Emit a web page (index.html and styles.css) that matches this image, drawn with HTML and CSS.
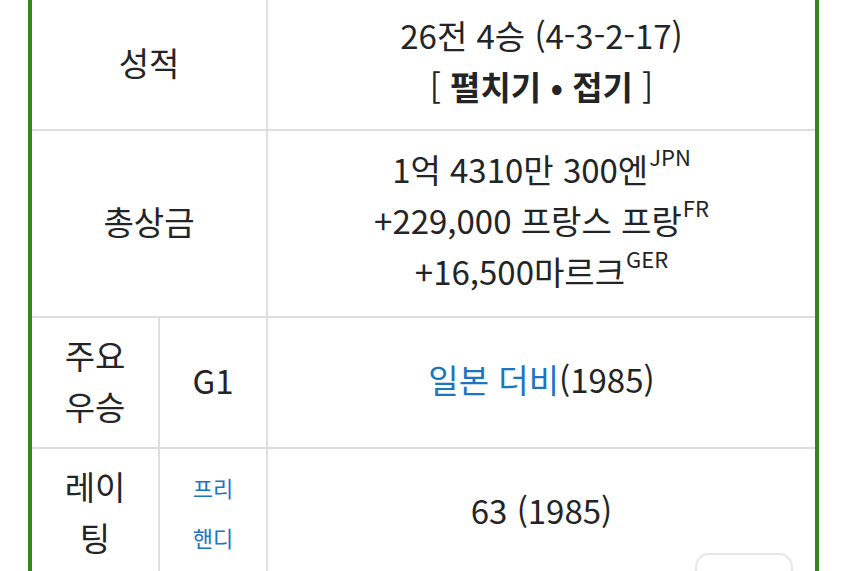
FILE: index.html
```html
<!DOCTYPE html>
<html lang="ko">
<head>
<meta charset="utf-8">
<link rel="stylesheet" href="styles.css">
</head>
<body>
<div class="info">
  <div class="cell label span2">성적</div>
  <div class="cell value">
    <div>26전 4승 (4-3-2-17)</div>
    <div>[ <b>펼치기 • 접기</b> ]</div>
  </div>

  <div class="cell label span2">총상금</div>
  <div class="cell value">
    <div>1억 4310만 300엔<sup>JPN</sup></div>
    <div>+229,000 프랑스 프랑<sup>FR</sup></div>
    <div>+16,500마르크<sup>GER</sup></div>
  </div>

  <div class="cell label">주요<br>우승</div>
  <div class="cell label">G1</div>
  <div class="cell value"><div><a class="link" href="#">일본 더비</a>(1985)</div></div>

  <div class="cell label">레이<br>팅</div>
  <div class="cell label small"><a class="link" href="#">프리<br>핸디</a></div>
  <div class="cell value"><div>63 (1985)</div></div>
</div>
<div class="float-btn"></div>
</body>
</html>
```

FILE: styles.css
```css
html, body {
  margin: 0;
  padding: 0;
  background: #ffffff;
  overflow: hidden;
}
body {
  font-family: "Noto Sans CJK KR", "Noto Sans", sans-serif;
  color: #222426;
  font-size: 33px;
  line-height: 51px;
}
.info {
  margin-left: 28px;
  width: 783px;
  display: grid;
  grid-template-columns: 126px 106px 547px;
  grid-template-rows: 129px 185px 129px 130px;
  gap: 2px;
  background: #dedede;
  border-left: 4px solid #34861b;
  border-right: 4px solid #34861b;
}
.cell {
  background: #ffffff;
  display: flex;
  flex-direction: column;
  align-items: center;
  justify-content: center;
  text-align: center;
  padding-bottom: 4px;
}
.value {
  padding-bottom: 7px;
}
.span2 {
  grid-column: span 2;
}
.small {
  font-size: 22px;
  line-height: 50px;
}
.value b {
  font-weight: 700;
}
sup {
  font-size: 22px;
  line-height: 0;
  vertical-align: 0;
  position: relative;
  top: -17px;
  margin-left: 1px;
}
.link {
  color: #1b76bf;
  text-decoration: none;
}
.float-btn {
  position: absolute;
  left: 695px;
  top: 553px;
  width: 94px;
  height: 40px;
  border: 2px solid #e6e6e6;
  border-radius: 14px;
  background: #ffffff;
}
```
